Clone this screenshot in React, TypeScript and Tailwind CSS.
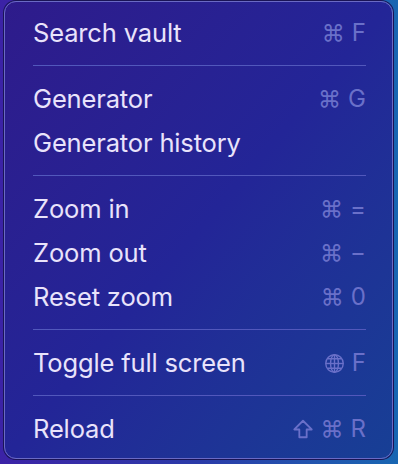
import { Fragment } from "react";

type Item = { label: string; keys: string[]; shift?: boolean; globe?: boolean };

const groups: Item[][] = [
	[{ label: "Search vault", keys: ["F"] }],
	[
		{ label: "Generator", keys: ["G"] },
		{ label: "Generator history", keys: [] },
	],
	[
		{ label: "Zoom in", keys: ["="] },
		{ label: "Zoom out", keys: ["−"] },
		{ label: "Reset zoom", keys: ["0"] },
	],
	[{ label: "Toggle full screen", keys: ["F"], globe: true }],
	[{ label: "Reload", keys: ["R"], shift: true }],
];

function GlobeIcon() {
	return (
		<svg
			className="h-[21px] w-[21px]"
			fill="none"
			stroke="currentColor"
			strokeWidth={1.6}
			viewBox="0 0 24 24"
		>
			<circle cx="12" cy="12" r="10" />
			<ellipse cx="12" cy="12" rx="4.5" ry="10" />
			<line x1="12" x2="12" y1="2" y2="22" />
			<line x1="2" x2="22" y1="12" y2="12" />
			<path d="M4 6.5h16M4 17.5h16" />
		</svg>
	);
}

function ShiftIcon() {
	return (
		<svg
			className="h-[22px] w-[22px]"
			fill="none"
			stroke="currentColor"
			strokeLinejoin="round"
			strokeWidth={2}
			viewBox="0 0 24 24"
		>
			<path d="M12 3 2.5 12.5H8V21h8v-8.5h5.5Z" />
		</svg>
	);
}

function Shortcut({ item }: { item: Item }) {
	if (item.keys.length === 0) return null;
	return (
		<div className="flex items-center gap-[7px] text-[#6a70c9]">
			{item.shift && <ShiftIcon />}
			{item.globe ? <GlobeIcon /> : <span className="text-[23px]">⌘</span>}
			{item.keys.map((k) => (
				<span className="text-[24px]" key={k}>
					{k}
				</span>
			))}
		</div>
	);
}

export default function App() {
	return (
		<div className="h-[464px] w-[398px] bg-gradient-to-r from-[#3b22a6] via-[#2a3aa8] to-[#1866b2] pl-[4px] pt-px">
			<div
				className="flex w-[389px] flex-col rounded-[12px] border border-[#6a6ac4] bg-gradient-to-br from-[#2e1b8b] via-[#232597] to-[#173f95] pt-[10px] pb-[6px] pl-[28px] pr-[26px] shadow-[0_0_0_1px_#1a1456]"
				style={{ fontFamily: "Inter, 'Noto Sans', sans-serif" }}
			>
				{groups.map((group, gi) => (
					<Fragment key={gi}>
						{gi > 0 && (
							<div className="pt-[9px] pb-[12px]">
								<div className="h-px bg-[#5258bc]" />
							</div>
						)}
						{group.map((item) => (
							<div
								className="flex h-[44px] items-center justify-between pb-[2px]"
								key={item.label}
							>
								<span className="text-[25.5px] tracking-[-0.15px] text-[#e9e3fb]">
									{item.label}
								</span>
								<Shortcut item={item} />
							</div>
						))}
					</Fragment>
				))}
			</div>
		</div>
	);
}
